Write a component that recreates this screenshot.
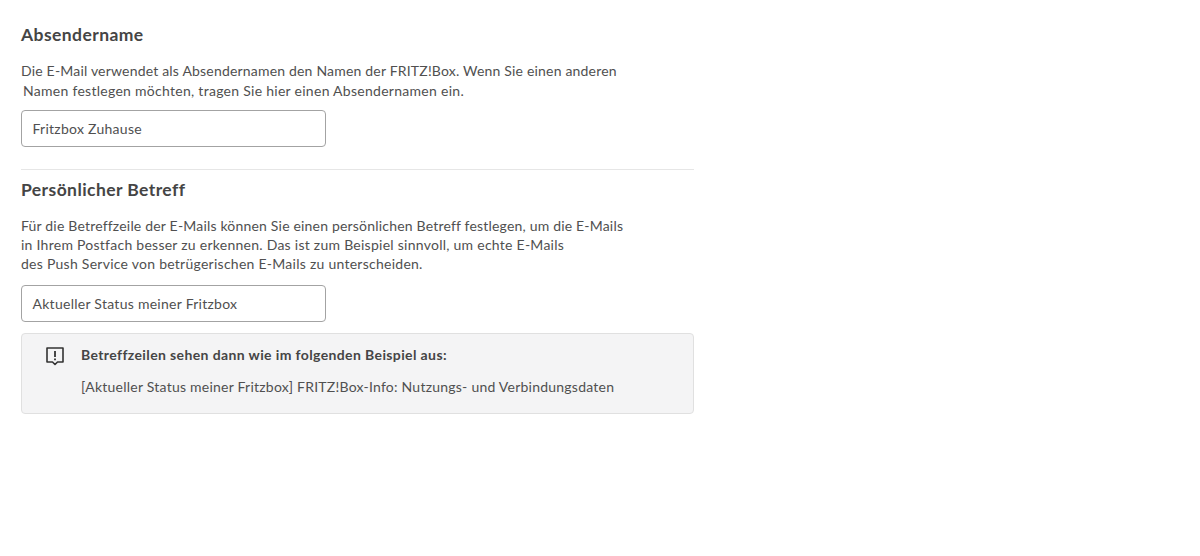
<main class="page">
  <section>
    <h2>Absendername</h2>
    <p>Die E-Mail verwendet als Absendernamen den Namen der FRITZ!Box. Wenn Sie einen anderen<br /><span class="nudge wide">Namen festlegen möchten, tragen Sie hier einen Absendernamen ein.</span></p>
    <div class="input">Fritzbox Zuhause</div>
  </section>

  <hr />

  <section>
    <h2>Persönlicher Betreff</h2>
    <p class="tight">Für die Betreffzeile der E-Mails können Sie einen persönlichen Betreff festlegen, um die E-Mails<br /><span class="wide">in Ihrem Postfach besser zu erkennen. Das ist zum Beispiel sinnvoll, um echte E-Mails</span><br /><span class="wide">des Push Service von betrügerischen E-Mails zu unterscheiden.</span></p>
    <div class="input">Aktueller Status meiner Fritzbox</div>
  </section>

  <div class="note">
    <svg viewBox="0 0 20 20" width="20" height="20" fill="none" aria-hidden="true">
      <path d="M2 2h16v14h-5.500L10 18.500 7.500 16H2z" stroke="#333" stroke-width="1.600" stroke-linejoin="round" />
      <path d="M10 5v6" stroke="#333" stroke-width="1.800" />
      <path d="M10 12.500v1.800" stroke="#333" stroke-width="1.800" />
    </svg>
    <div class="note-text">
      <strong>Betreffzeilen sehen dann wie im folgenden Beispiel aus:</strong>
      <span>[Aktueller Status meiner Fritzbox] FRITZ!Box-Info: Nutzungs- und Verbindungsdaten</span>
    </div>
  </div>
</main>

<style>
  :global(body) {
    margin: 0;
    background: #fff;
  }
  .page {
    width: 672.500px;
    padding: 25px 0 0 21px;
    font-family: "Lato", "Liberation Sans", sans-serif;
    font-size: 14px;
    letter-spacing: 0.190px;
    color: #505050;
  }
  h2 {
    margin: 0;
    font-size: 17.500px;
    line-height: 20px;
    font-weight: 700;
    letter-spacing: 0.420px;
    color: #454545;
  }
  p {
    margin: 16px 0 9px;
    line-height: 20px;
  }
  p.tight {
    line-height: 19px;
    margin: 16px 0 12px;
  }
  .wide {
    letter-spacing: 0.260px;
  }
  .nudge {
    margin-left: 2px;
    letter-spacing: 0.280px;
  }
  .input {
    width: 304.500px;
    height: 37px;
    box-sizing: border-box;
    border: 1.500px solid #a3a3a3;
    border-radius: 4px;
    padding: 0 10.500px;
    line-height: 36px;
    letter-spacing: 0.270px;
  }
  hr {
    border: 0;
    height: 1px;
    background: #e6e6e6;
    margin: 22px 0 10px;
  }
  .note {
    margin-top: 11px;
    height: 81px;
    box-sizing: border-box;
    background: #f4f4f5;
    border: 1.500px solid #e0e0e0;
    border-radius: 4px;
    padding: 11px 0 0 23px;
    display: flex;
    gap: 16px;
    letter-spacing: 0.235px;
  }
  .note svg {
    flex: none;
    margin-top: 1px;
  }
  .note-text {
    display: flex;
    flex-direction: column;
    gap: 12px;
    line-height: 20px;
  }
  strong {
    font-weight: 700;
    letter-spacing: 0.380px;
    color: #454545;
  }
</style>
